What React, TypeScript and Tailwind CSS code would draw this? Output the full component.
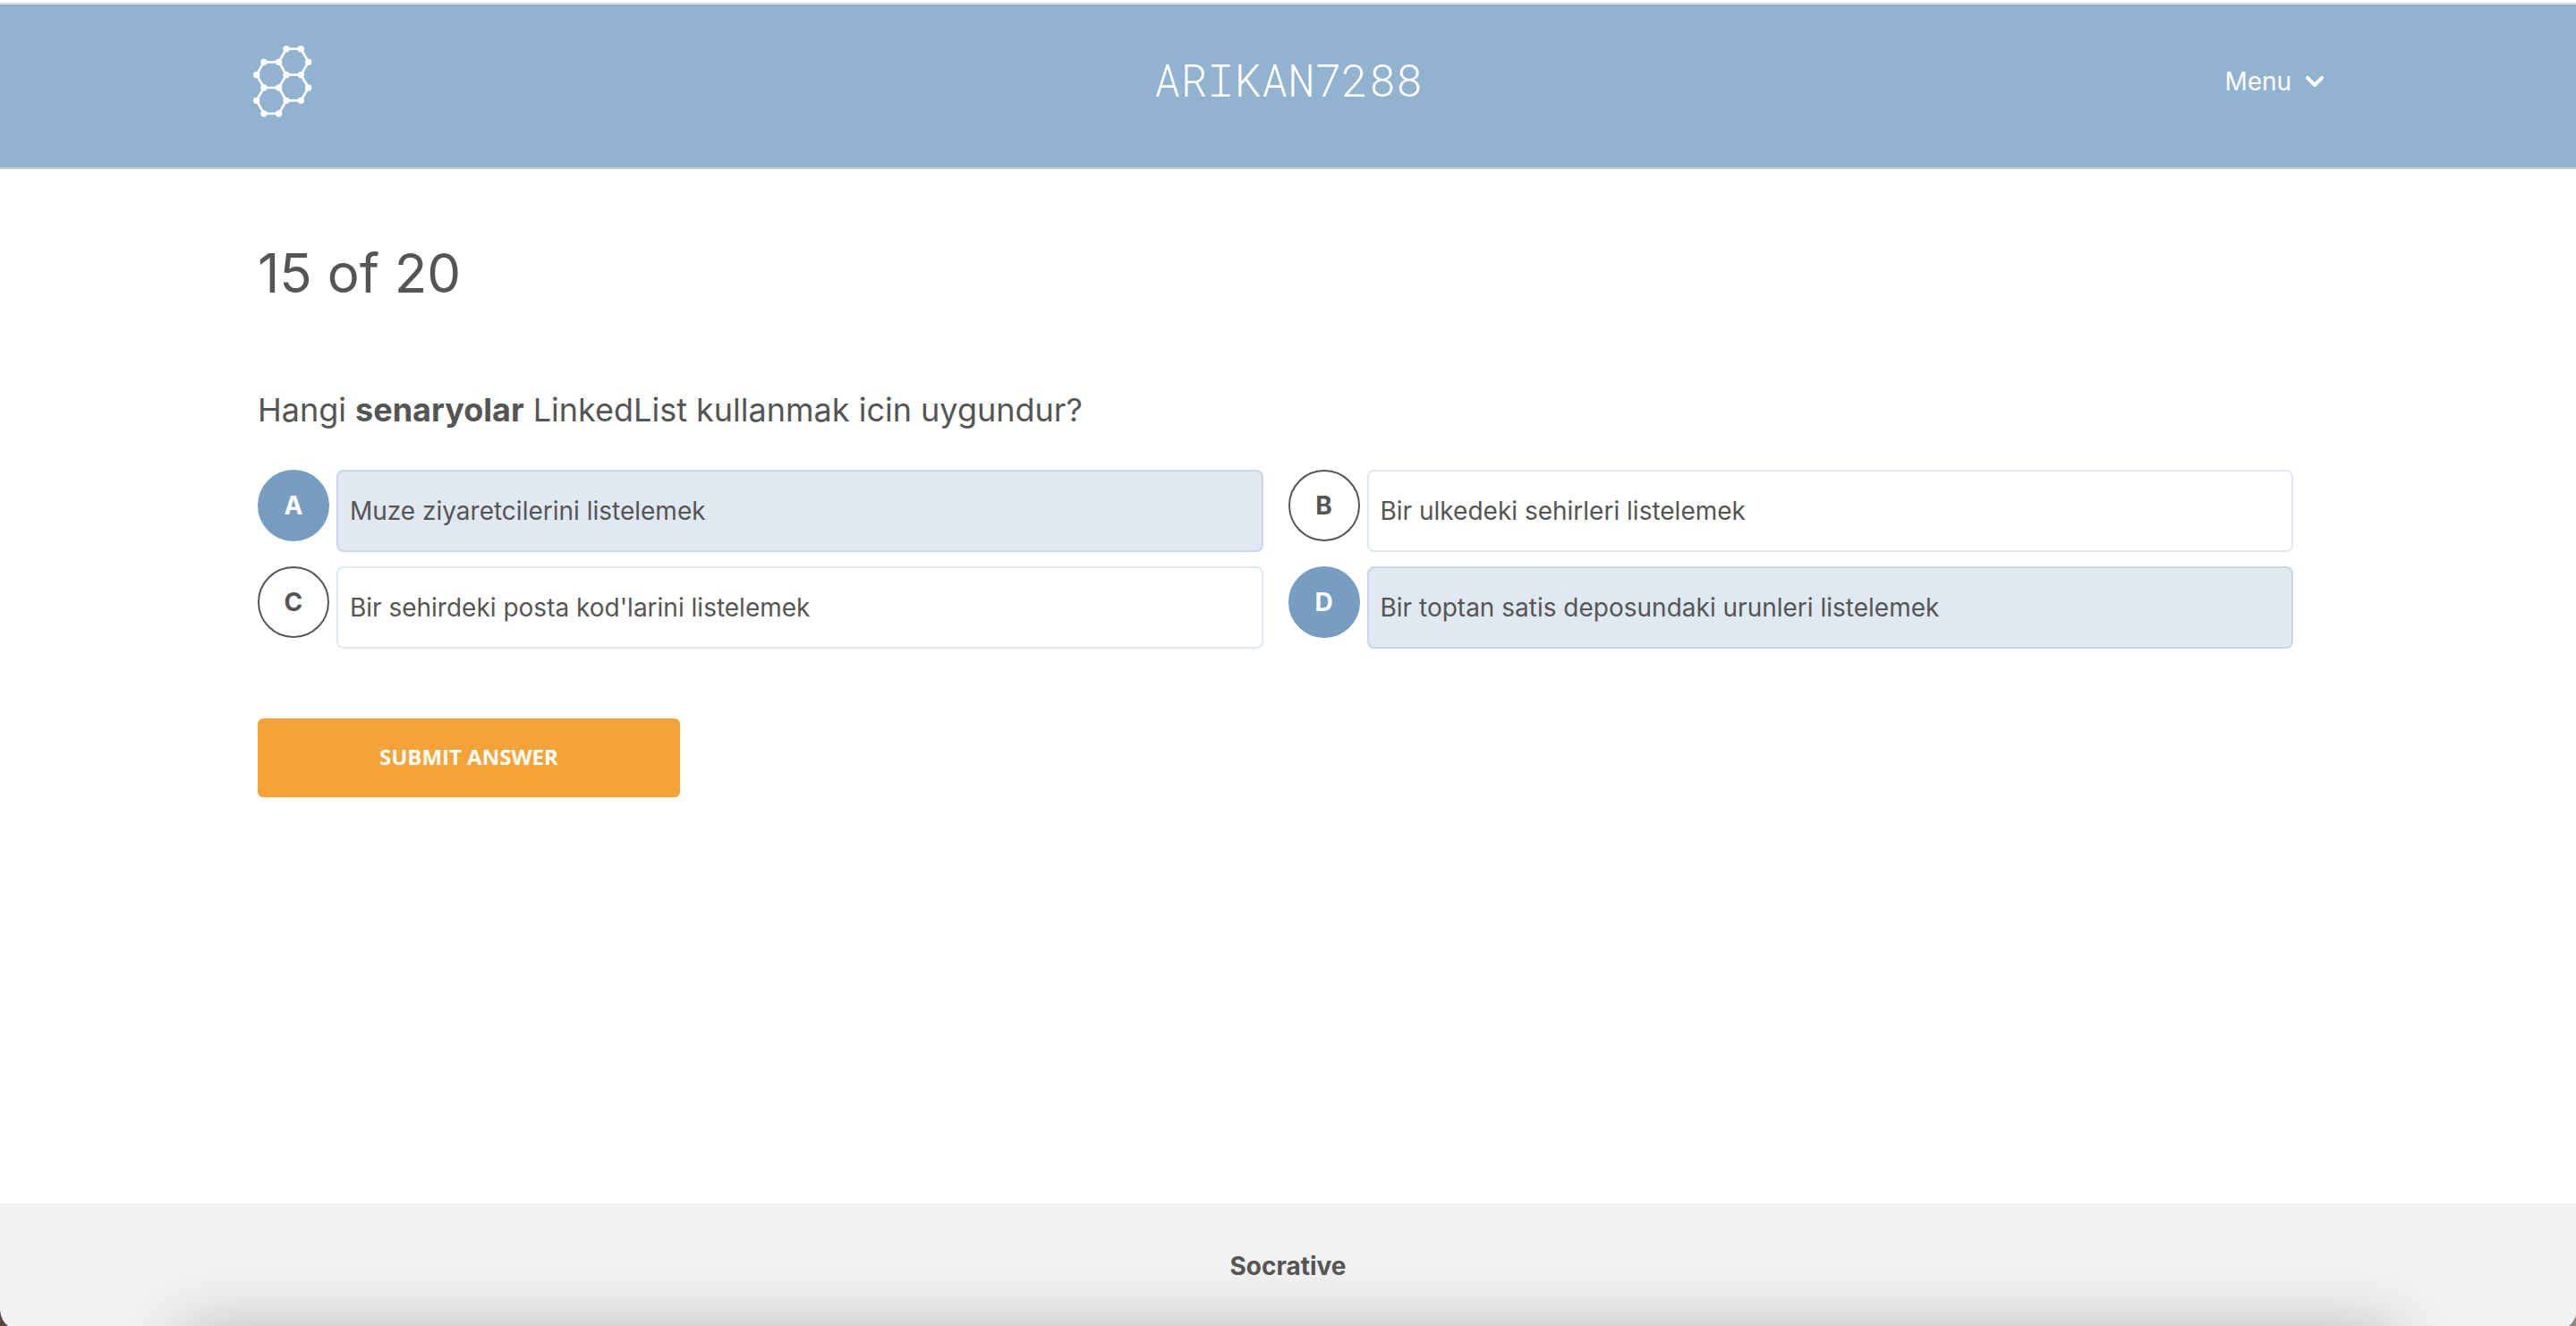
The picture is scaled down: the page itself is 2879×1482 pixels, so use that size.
import { useState } from "react";

const answers = [
  { letter: "A", text: "Muze ziyaretcilerini listelemek", selected: true },
  { letter: "B", text: "Bir ulkedeki sehirleri listelemek", selected: false },
  { letter: "C", text: "Bir sehirdeki posta kod'larini listelemek", selected: false },
  { letter: "D", text: "Bir toptan satis deposundaki urunleri listelemek", selected: true },
];

const logoNodes = [
  [147, 44], [196, 44], [221, 88], [196, 131], [147, 131], [122, 88],
  [72, 88], [47, 131], [72, 174], [122, 174], [221, 174], [196, 217],
  [147, 217], [47, 217], [72, 261], [122, 261],
];

function Logo() {
  return (
    <svg viewBox="33 30 204 246" className="h-[82px] w-[68px]" fill="none" aria-hidden="true">
      <g stroke="white" strokeWidth="8">
        <path d="M147 44H196L221 88L196 131H147L122 88Z" />
        <path d="M122 88H72L47 131L72 174H122L147 131" />
        <path d="M196 131L221 174L196 217H147L122 174" />
        <path d="M72 174L47 217L72 261H122L147 217" />
      </g>
      {logoNodes.map(([x, y]) => (
        <circle key={`${x}-${y}`} cx={x} cy={y} r="11" fill="white" />
      ))}
    </svg>
  );
}

function Header() {
  return (
    <header className="mt-[3px] border-t-2 border-b-2 border-t-[#dfdfdf] border-b-[#cacaca] bg-[#92b3cf] pb-2.5 text-white">
      <div className="mx-auto w-4/5">
        <div className="-mx-1.5 grid h-[172px] grid-cols-3 items-center">
          <Logo />
          <h1 className="pb-1 text-center font-['Roboto_Mono','Liberation_Mono',monospace] text-[50px] leading-[52px] font-light">
            ARIKAN7288
          </h1>
          <button type="button" className="flex items-center gap-4 justify-self-end text-[28px] leading-9">
            Menu
            <svg viewBox="0 0 20 12" className="h-3 w-5" fill="none" stroke="white" strokeWidth="4" strokeLinecap="round" strokeLinejoin="round" aria-hidden="true">
              <path d="M2 2L10 10L18 2" />
            </svg>
          </button>
        </div>
      </div>
    </header>
  );
}

function Answer({ letter, text, selected }: { letter: string; text: string; selected: boolean }) {
  const [checked, setChecked] = useState(selected);
  return (
    <label className="relative flex cursor-pointer items-start gap-2 pr-7">
      <input type="checkbox" className="peer sr-only" checked={checked} onChange={() => setChecked(!checked)} />
      <span className="flex size-20 shrink-0 items-center justify-center rounded-full border-2 border-[#555] text-[28px] leading-9 font-bold peer-checked:border-[#779dc1] peer-checked:bg-[#779dc1] peer-checked:text-white">
        {letter}
      </span>
      <span className="flex min-h-[92px] grow items-center rounded-lg border-2 border-[#dfe8f1] px-[13px] text-[28px] leading-9 peer-checked:border-[#c8d8e7] peer-checked:bg-[#e0e8f1]">
        {text}
      </span>
    </label>
  );
}

export default function App() {
  return (
    <div className="flex min-h-screen flex-col bg-white font-['Inter',sans-serif] text-[#555]">
      <Header />
      <main className="mx-auto w-4/5 grow pt-20">
        <h2 className="text-[60px] leading-[72px]">15 of 20</h2>
        <form onSubmit={(e) => e.preventDefault()}>
          <p className="mt-[95px] text-[36px] leading-[44px]">
            Hangi <strong className="font-bold">senaryolar</strong> LinkedList kullanmak icin uygundur?
          </p>
          <div className="mt-[45px] grid grid-cols-2 gap-y-4">
            {answers.map((a) => (
              <Answer key={a.letter} {...a} />
            ))}
          </div>
          <button
            type="submit"
            className="mt-[78px] h-[88px] w-[472px] rounded-md bg-[#f5a339] pb-0.5 font-['Open_Sans',sans-serif] text-2xl font-bold text-white"
          >
            SUBMIT ANSWER
          </button>
        </form>
      </main>
      <footer className="relative flex h-[137px] justify-center overflow-hidden bg-[#f2f2f2] pt-[52px] text-[28px] leading-9 font-bold">
        <div className="pointer-events-none absolute inset-x-[7%] -bottom-32 h-30 shadow-[0_0_80px_rgba(0,0,0,0.28)]" />
        <span className="relative">Socrative</span>
        <svg viewBox="0 0 10 18" className="absolute bottom-0 left-0 h-[18px] w-2.5" aria-hidden="true">
          <path d="M0 0Q1 12 9 18H0Z" fill="#5a443c" />
        </svg>
        <svg viewBox="0 0 8 12" className="absolute right-0 bottom-0 h-3 w-2" aria-hidden="true">
          <path d="M8 0Q6 7 0 12H8Z" fill="#8f857d" />
        </svg>
      </footer>
    </div>
  );
}
